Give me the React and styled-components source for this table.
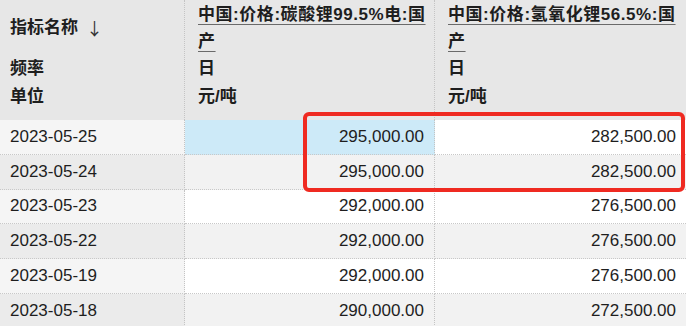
import React from "react";
import styled, { createGlobalStyle } from "styled-components";

const GlobalStyle = createGlobalStyle`
  html, body { margin: 0; padding: 0; background: #ffffff; }
  body { width: 686px; height: 326px; overflow: hidden; }
  * { box-sizing: border-box; }
`;

const Wrapper = styled.div`
  position: relative;
  width: 686px;
  height: 326px;
  overflow: hidden;
  font-family: "Liberation Sans", "Noto Sans CJK SC", sans-serif;
  color: #1e1e1e;
`;

const Table = styled.div`
  display: grid;
  grid-template-columns: 185px 250px 251px;
  grid-auto-rows: 34.8px;
  grid-template-rows: 120px;
`;

const HeaderCell = styled.div`
  background: #e7e7e7;
  padding: 1px ${(p) => (p.$first ? "10px" : "12px")} 0 ${(p) => (p.$first ? "10px" : "13px")};
  border-right: ${(p) => (p.$last ? "none" : "1px dotted #c4c4c4")};
  display: flex;
  flex-direction: column;
  font-weight: bold;
  font-size: 17px;
  line-height: 27px;
  font-family: "Liberation Sans", "Noto Sans CJK SC", sans-serif;
`;

const NameLabel = styled.div`
  height: 54px;
  line-height: 54px;
  white-space: nowrap;
  display: flex;
  align-items: center;
`;

const SortArrow = styled.span`
  font-weight: normal;
  margin-left: 8px;
  font-family: "Noto Sans CJK SC", sans-serif;
  font-size: 17px;
  color: #333;
`;

const TitleBlock = styled.div`
  height: 54px;
`;

const TitleLink = styled.span`
  text-decoration: underline;
  text-decoration-thickness: 1px;
  text-underline-offset: 4px;
  text-decoration-color: #6a6a6a;
  letter-spacing: 0.55px;
  white-space: nowrap;
`;

const MetaLine = styled.div`
  height: 27px;
  margin-top: ${(p) => (p.$gap ? "1px" : "0")};
  white-space: nowrap;
`;

const DateCell = styled.div`
  background: ${(p) => (p.$even ? "#ebebeb" : "#f5f5f5")};
  border-right: 1px dotted #c4c4c4;
  border-bottom: 1px dotted #c8c8c8;
  padding: 0 10px;
  display: flex;
  align-items: center;
  font-size: 17px;
`;

const ValueCell = styled.div`
  background: ${(p) => (p.$selected ? "#cdeaf8" : p.$even ? "#f2f2f2" : "#ffffff")};
  border-right: ${(p) => (p.$last ? "none" : "1px dotted #c4c4c4")};
  border-bottom: 1px dotted #c8c8c8;
  padding: 0 10px;
  display: flex;
  align-items: center;
  justify-content: flex-end;
  font-size: 17px;
`;

const Highlight = styled.div`
  position: absolute;
  left: 303px;
  top: 112px;
  width: 382px;
  height: 80px;
  border: 4px solid #ef2a21;
  border-radius: 6px;
  pointer-events: none;
`;

const columns = [
  {
    title: ["中国:价格:碳酸锂99.5%电:国", "产"],
    freq: "日",
    unit: "元/吨",
  },
  {
    title: ["中国:价格:氢氧化锂56.5%:国", "产"],
    freq: "日",
    unit: "元/吨",
  },
];

const rows = [
  ["2023-05-25", "295,000.00", "282,500.00"],
  ["2023-05-24", "295,000.00", "282,500.00"],
  ["2023-05-23", "292,000.00", "276,500.00"],
  ["2023-05-22", "292,000.00", "276,500.00"],
  ["2023-05-19", "292,000.00", "276,500.00"],
  ["2023-05-18", "290,000.00", "272,500.00"],
];

export default function App() {
  return (
    <Wrapper>
      <GlobalStyle />
      <Table>
        <HeaderCell $first>
          <NameLabel>
            指标名称<SortArrow>↓</SortArrow>
          </NameLabel>
          <MetaLine>频率</MetaLine>
          <MetaLine $gap>单位</MetaLine>
        </HeaderCell>
        {columns.map((c, i) => (
          <HeaderCell key={i} $last={i === columns.length - 1}>
            <TitleBlock>
              <TitleLink>
                {c.title[0]}
                <br />
                {c.title[1]}
              </TitleLink>
            </TitleBlock>
            <MetaLine>{c.freq}</MetaLine>
            <MetaLine $gap>{c.unit}</MetaLine>
          </HeaderCell>
        ))}
        {rows.map((r, ri) => (
          <React.Fragment key={r[0]}>
            <DateCell $even={ri % 2 === 1}>{r[0]}</DateCell>
            <ValueCell $even={ri % 2 === 1} $selected={ri === 0}>
              {r[1]}
            </ValueCell>
            <ValueCell $even={ri % 2 === 1} $last>
              {r[2]}
            </ValueCell>
          </React.Fragment>
        ))}
      </Table>
      <Highlight />
    </Wrapper>
  );
}
